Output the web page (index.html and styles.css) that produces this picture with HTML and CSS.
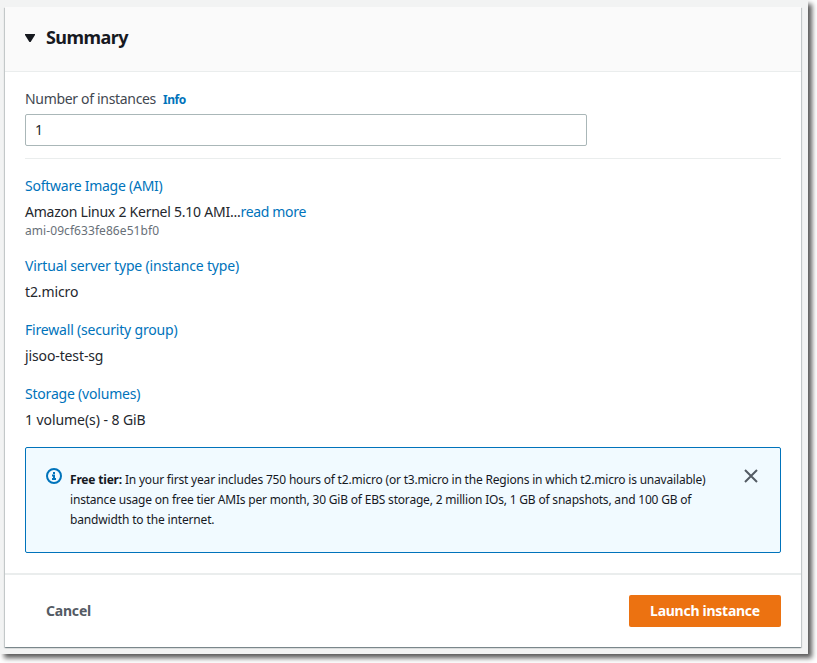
FILE: index.html
```html
<!DOCTYPE html>
<html lang="en">
<head>
<meta charset="utf-8">
<title>Launch instance summary</title>
<link rel="stylesheet" href="styles.css">
</head>
<body>
<main class="sheet">
  <section class="card">
    <header class="card-header">
      <svg class="caret" width="10" height="8" viewBox="0 0 10 8"><path d="M0 0h10v1L5.6 8H4.4L0 1z" fill="#16191f"/></svg>
      <h1><span class="t-summary">Summary</span></h1>
    </header>
    <div class="card-body">
      <div class="field-label"><label for="count" class="t-number">Number of instances</label><a class="info t-info">Info</a></div>
      <input id="count" class="count" type="text" value="1">
      <hr class="divider">
      <dl class="details">
        <div class="detail">
          <dt><a class="t-ami">Software Image (AMI)</a></dt>
          <dd><span class="t-kernel">Amazon Linux 2 Kernel 5.10 AMI...</span><a class="t-more">read more</a></dd>
          <dd class="hint"><span class="t-id">ami-09cf633fe86e51bf0</span></dd>
        </div>
        <div class="detail">
          <dt><a class="t-type">Virtual server type (instance type)</a></dt>
          <dd><span class="t-micro">t2.micro</span></dd>
        </div>
        <div class="detail">
          <dt><a class="t-firewall">Firewall (security group)</a></dt>
          <dd><span class="t-sg">jisoo-test-sg</span></dd>
        </div>
        <div class="detail">
          <dt><a class="t-storage">Storage (volumes)</a></dt>
          <dd><span class="t-volume">1 volume(s) - 8 GiB</span></dd>
        </div>
      </dl>
      <aside class="alert">
        <svg class="alert-icon" width="16" height="16" viewBox="0 0 16 16" fill="none" stroke="#0073bb" stroke-width="2"><circle cx="8" cy="8" r="7"/><path d="M6 11h4M8 11V7.5H6M7 5h2"/></svg>
        <p><span class="line t-line1"><b>Free tier:</b> In your first year includes 750 hours of t2.micro (or t3.micro in the Regions in which t2.micro is unavailable)</span>
        <span class="line t-line2">instance usage on free tier AMIs per month, 30 GiB of EBS storage, 2 million IOs, 1 GB of snapshots, and 100 GB of</span>
        <span class="line t-line3">bandwidth to the internet.</span></p>
        <button class="close" aria-label="Close"><svg width="14" height="14" viewBox="0 0 14 14" stroke="#545b64" stroke-width="2"><path d="M1 1l12 12M13 1L1 13"/></svg></button>
      </aside>
    </div>
    <footer class="card-footer">
      <button class="cancel"><span class="t-cancel">Cancel</span></button>
      <button class="launch"><span class="t-launch">Launch instance</span></button>
    </footer>
  </section>
</main>
</body>
</html>
```
FILE: styles.css
```css
* { box-sizing: border-box; }
body {
  margin: 0;
  height: 663px;
  overflow: hidden;
  background: #fff;
  color: #16191f;
  font: 14px/22px "Noto Sans", sans-serif;
}
.sheet {
  width: 808px;
  height: 654px;
  padding: 7px 7px 7px 5px;
  background: #f2f3f3;
  box-shadow: 4px 4px 5px rgba(0, 0, 0, .65);
}
.card {
  display: flex;
  flex-direction: column;
  height: 640px;
  background: #fff;
  box-shadow: 0 1px 1px rgba(0, 28, 36, .3), 1px 1px 1px rgba(0, 28, 36, .15), -1px 1px 1px rgba(0, 28, 36, .15);
}
.card-header {
  display: flex;
  align-items: center;
  height: 65px;
  padding: 0 20px 2px;
  background: #fafafa;
  border-bottom: 1px solid #eaeded;
}
.caret { margin-right: 11px; }
h1 { margin: 0 0 2px; font-size: 18px; line-height: 22px; font-weight: 700; }
.card-body { padding: 16px 20px 0; }
.field-label { display: flex; align-items: center; height: 22px; margin-bottom: 4px; color: #545b64; }
.field-label label { color: #414750; }
a { color: #0073bb; }
.info { margin: 2px 0 0 7px; font-size: 12px; font-weight: 700; }
.count {
  display: block;
  width: 562px;
  height: 32px;
  padding: 0 9px 2px;
  border: 1px solid #aab7b8;
  border-radius: 2px;
  color: #24272d;
  font: inherit;
}
.divider { height: 1px; margin: 12px 0 16px; border: 0; background: #eaeded; }
.details { margin: 0; }
.detail { margin-bottom: 16px; }
dt { height: 22px; margin-bottom: 4px; }
dd { height: 22px; margin: 0; white-space: nowrap; color: #24272d; }
dd.hint { height: 16px; line-height: 16px; font-size: 12px; color: #687078; }
.alert {
  display: flex;
  align-items: flex-start;
  height: 106px;
  padding: 20px 22px 0 20px;
  border: 1px solid #0073bb;
  border-radius: 2px;
  background: #f1faff;
}
.alert-icon { margin-right: 8px; flex: none; }
.alert p { flex: 1; margin: 2px 0 0; font-size: 12px; line-height: 20px; white-space: nowrap; }
.line { display: block; }
button { border: 0; padding: 0; background: none; font: inherit; font-weight: 700; }
.close { display: flex; margin-top: 1px; }
.card-footer {
  display: flex;
  justify-content: space-between;
  align-items: center;
  height: 74px;
  margin-top: auto;
  padding: 0 20px;
  border-top: 2px solid #eaeded;
}
.cancel { padding-left: 21px; color: #545b64; }
.launch { width: 152px; height: 32px; border-radius: 2px; background: #ec7211; color: #fff; white-space: nowrap; }

/* Tracking */
.t-summary { letter-spacing: -.55px; }
.t-number { letter-spacing: -.32px; }
.t-info { letter-spacing: -.5px; }
.t-ami { letter-spacing: -.25px; }
.t-kernel { letter-spacing: -.24px; }
.t-more { letter-spacing: -.33px; }
.t-id { letter-spacing: .07px; }
.t-type { letter-spacing: -.16px; }
.t-micro, .t-sg { letter-spacing: -.12px; }
.t-firewall { letter-spacing: -.19px; }
.t-storage { letter-spacing: -.2px; }
.t-volume { letter-spacing: -.07px; }
.t-line1, .t-line2 { letter-spacing: -.19px; }
.t-line3 { letter-spacing: -.15px; }
.t-cancel { letter-spacing: -.2px; }
.t-launch { letter-spacing: -.27px; }
```
